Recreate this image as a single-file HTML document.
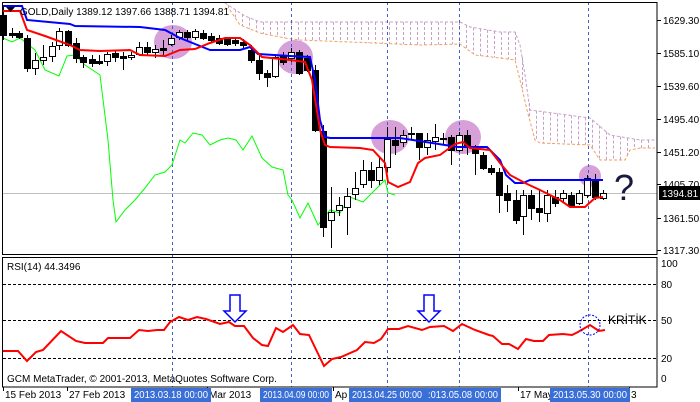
<!DOCTYPE html>
<html><head><meta charset="utf-8"><style>
body{margin:0;background:#fff;width:700px;height:402px;overflow:hidden;font-family:"Liberation Sans",sans-serif}
svg{display:block}
text{font-family:"Liberation Sans",sans-serif;font-size:10px;fill:#000}
</style></head><body>
<svg id="s" width="700" height="402" viewBox="0 0 700 402" xmlns="http://www.w3.org/2000/svg">
<rect width="700" height="402" fill="#fff"/>
<g id="cloud"></g>
<g fill="#d8a0d8">
<ellipse cx="173" cy="42" rx="19" ry="17"/>
<ellipse cx="295" cy="57" rx="18" ry="17"/>
<ellipse cx="390" cy="137" rx="19" ry="17"/>
<ellipse cx="463" cy="137" rx="18" ry="17"/>
<ellipse cx="590" cy="176" rx="11" ry="11"/>
</g>
<g stroke="#4060d0" stroke-dasharray="3,3" stroke-width="1">
<line x1="172.5" y1="2" x2="172.5" y2="387"/><line x1="291.5" y1="2" x2="291.5" y2="387"/>
<line x1="387.5" y1="2" x2="387.5" y2="387"/><line x1="459.5" y1="2" x2="459.5" y2="387"/>
<line x1="588.5" y1="2" x2="588.5" y2="387"/>
</g>
<line x1="2" y1="193.5" x2="657" y2="193.5" stroke="#c0c0c0"/>
<polyline fill="none" stroke="#00ff00" stroke-width="1" points="3,38 12,42 20,38 35,50 45,70 59,76 67,56 75,55 85,65 100,75 108,140 113,200 116,222 125,210 135,200 145,188 155,175 165,172 172,165 180,140 185,143 193,133 202,135 210,145 220,140 228,138 236,140 243,150 252,136 262,158 272,167 283,170 288,195 292,200 300,218 308,203 318,225 330,210 340,213 350,197 363,202 378,187 385,180 388,193 395,195"/>
<g id="candles"></g>
<polyline fill="none" stroke="#0000ff" stroke-width="2" points="2,6 22,6 27,20 70,24 75,26 140,27 165,30 180,38 200,46 210,50 240,50 250,47 258,54 290,56 310,57 315,80 320,120 325,137 330,138 400,138 445,145 458,147 487,147 500,160 506,175 515,183 523,183 530,180 603,180"/>
<polyline fill="none" stroke="#ff0000" stroke-width="2" points="2,11 20,11 27,30 45,36 70,45 80,50 100,51 130,50 140,55 165,56 180,50 195,49 210,43 225,38 240,38 250,45 262,57 290,60 305,62 312,80 320,130 325,145 330,147 360,148 373,150 385,163 388,182 398,187 410,182 418,163 425,158 440,155 455,144 463,142 470,148 490,150 500,163 510,175 525,183 540,190 550,195 560,200 570,207 585,207 595,198 603,197"/>
<rect x="2.5" y="2.5" width="654.5" height="252" fill="none" stroke="#000"/>
<rect x="2.5" y="257.5" width="654.5" height="129.5" fill="none" stroke="#000"/>
<path d="M6 7h9l-4.5 5z" fill="#000"/>
<text x="20" y="15" font-size="11">GOLD,Daily  1389.12 1397.66 1388.71 1394.81</text>
<text x="614" y="200" style="font-size:36px;fill:#1a1a40">?</text>
<g id="axis"></g>
<rect x="659" y="186" width="41" height="14" fill="#000"/>
<text x="662" y="197" style="fill:#fff">1394.81</text>
<g stroke="#000" stroke-dasharray="3,2"><line x1="3" y1="284.5" x2="657" y2="284.5"/><line x1="3" y1="320.5" x2="657" y2="320.5"/><line x1="3" y1="358.5" x2="657" y2="358.5"/></g>
<text x="7" y="270">RSI(14) 44.3496</text>
<polyline fill="none" stroke="#ff0000" stroke-width="2" points="3,351 18,351 27,361 36,352 43,350 61,331 76,341 85,343 103,343 108,338 130,338 139,330 148,331 157,330 164,330 170,322 179,317 188,320 197,317 206,319 220,324 229,322 235,326 244,326 253,338 262,345 268,346 276,328 283,332 293,325 300,334 309,335 324,366 332,359 341,357 357,350 365,342 374,343 381,339 388,329 399,329 408,326 422,330 430,327 444,326 453,331 462,324 475,330 489,335 493,336 502,344 509,344 518,349 526,339 534,341 543,341 549,335 563,334 572,335 578,332 590,325 599,331 605,330"/>
<path d="M230 295h10v16h6l-11 11l-11-11h6z" fill="#fff" stroke="#0000ff" stroke-width="1.5"/>
<path d="M424 295h10v16h6l-11 11l-11-11h6z" fill="#fff" stroke="#0000ff" stroke-width="1.5"/>
<circle cx="590" cy="325" r="10" fill="none" stroke="#0000ff" stroke-dasharray="2,1.5"/>
<text x="608" y="324" style="font-size:12px">KRİTİK</text>
<text x="7" y="382">GCM MetaTrader, © 2001-2013, MetaQuotes Software Corp.</text>
<text x="661" y="267">100</text><text x="661" y="288">80</text><text x="661" y="324">50</text><text x="661" y="362">20</text><text x="661" y="382">0</text>
<g id="taxis"></g>
</svg>
<script>
(function(){
var NS="http://www.w3.org/2000/svg";
function el(p,t,a,txt){var e=document.createElementNS(NS,t);for(var k in a)e.setAttribute(k,a[k]);if(txt)e.textContent=txt;document.getElementById(p).appendChild(e);return e;}
function interp(pts,x){for(var i=0;i<pts.length-1;i++){if(x>=pts[i][0]&&x<=pts[i+1][0]){var t=(x-pts[i][0])/(pts[i+1][0]-pts[i][0]);return pts[i][1]+t*(pts[i+1][1]-pts[i][1]);}}return pts[pts.length-1][1];}
var ctop=[[225,3],[245,16],[260,22],[460,22],[470,27],[500,32],[515,32],[520,45],[525,75],[530,110],[545,112],[590,118],[610,135],[640,140],[655,140]];
var cbot=[[225,8],[230,10],[240,25],[260,33],[285,38],[300,40],[350,42],[420,45],[460,44],[475,55],[500,58],[515,60],[520,80],[527,110],[535,140],[540,143],[590,145],[600,160],[625,160],[630,150],[640,148],[655,148]];
for(var x=228;x<655;x+=7){var a=interp(ctop,x),b=interp(cbot,x);el("cloud","line",{x1:x+.5,y1:a,x2:x+.5,y2:b,stroke:"#c8a0c8","stroke-dasharray":"3,2"});}
var tp=ctop.map(function(p){return p.join(",")}).join(" "),bp=cbot.map(function(p){return p.join(",")}).join(" ");
el("cloud","polyline",{points:tp,fill:"none",stroke:"#c8a0c8","stroke-dasharray":"3,2"});
el("cloud","polyline",{points:bp,fill:"none",stroke:"#f0a060","stroke-dasharray":"3,2"});
var C=[[3,15,35,5,40,0],[12,33,35,28,38,0],[19,33,37,31,39,0],[27,38,68,35,72,0],[35,60,68,53,75,1],[43,57,60,45,65,1],[52,46,56,42,62,1],[59,31,45,28,50,1],[68,31,45,30,47,0],[76,43,58,38,63,0],[83,57,62,55,68,0],[92,59,63,55,67,0],[99,61,63,55,65,0],[107,54,61,52,66,1],[115,53,57,50,62,0],[123,56,58,52,70,0],[131,55,57,52,60,1],[139,47,54,42,56,1],[147,47,52,42,55,0],[155,49,52,45,58,1],[163,48,50,40,55,0],[171,38,44,35,46,1],[179,32,37,30,40,1],[187,32,37,30,40,0],[195,31,37,29,40,1],[203,33,38,30,40,0],[211,36,40,33,43,0],[219,38,43,35,45,0],[227,39,44,37,46,0],[235,40,43,37,46,0],[243,42,45,39,48,0],[251,50,60,45,63,0],[259,60,73,55,80,0],[267,73,77,70,87,0],[275,57,76,54,78,1],[283,55,62,52,65,0],[291,52,58,48,62,1],[299,52,73,50,75,0],[307,58,70,55,72,0],[315,70,130,65,132,0],[323,131,227,125,237,0],[331,212,220,187,248,1],[339,205,210,197,216,1],[347,196,207,188,235,1],[355,188,194,172,200,1],[363,170,184,160,188,1],[371,170,180,162,188,0],[379,167,180,158,185,1],[387,139,167,127,172,1],[395,140,145,127,155,0],[403,135,142,130,147,1],[411,133,134,127,140,0],[419,133,147,133,160,0],[427,140,147,133,155,1],[435,137,141,124,150,1],[443,138,139,133,145,0],[451,137,150,135,165,0],[459,135,150,132,152,1],[467,135,145,130,155,0],[475,148,153,145,175,0],[483,155,168,152,170,0],[491,168,172,165,175,0],[499,172,195,168,213,0],[507,193,200,185,212,0],[516,200,220,190,224,0],[523,195,216,190,235,1],[531,195,208,190,220,0],[539,208,212,190,222,0],[547,195,213,190,222,1],[555,197,203,190,207,0],[563,193,198,190,203,1],[571,195,205,192,207,0],[579,193,203,190,205,1],[587,178,195,175,198,1],[595,180,197,174,200,0],[603,193,198,190,200,1]];
C.forEach(function(c){var x=c[0];el("candles","line",{x1:x+.5,y1:c[3],x2:x+.5,y2:c[4],stroke:"#000"});
var h=Math.max(1,c[2]-c[1]);el("candles","rect",{x:x-2.5,y:c[1]+.5,width:6,height:h,fill:c[5]?"#fff":"#000",stroke:"#000"});});
var L=[["1629.30",20],["1585.10",53],["1539.60",86],["1495.40",119],["1451.20",152],["1405.70",184],["1361.50",218],["1317.30",250]];
L.forEach(function(l){el("axis","line",{x1:657,y1:l[1]+.5,x2:661,y2:l[1]+.5,stroke:"#000"});el("axis","text",{x:663,y:l[1]+4},l[0]);});
var T=[[3,"15 Feb 2013"],[67,"27 Feb 2013"],[207,"Mar 2013"],[333,"Ap"],[518,"17 May"],[629,"3"]];
T.forEach(function(t){el("taxis","text",{x:t[0]+2,y:398},t[1]);el("taxis","line",{x1:t[0]+.5,y1:387,x2:t[0]+.5,y2:391,stroke:"#000"});});
var B=[[131,80,"2013.03.18 00:00"],[260,72,"2013.04.09 00:00"],[349,76,"2013.04.25 00:00"],[425,76,":013.05.08 00:00"],[550,80,"2013.05.30 00:00"]];
B.forEach(function(b){el("taxis","rect",{x:b[0],y:388,width:b[1],height:14,fill:"#3a6fd8"});el("taxis","text",{x:b[0]+3,y:398,style:"fill:#fff",textLength:b[1]-6,lengthAdjust:"spacingAndGlyphs"},b[2]);});
})();
</script>
</body></html>
